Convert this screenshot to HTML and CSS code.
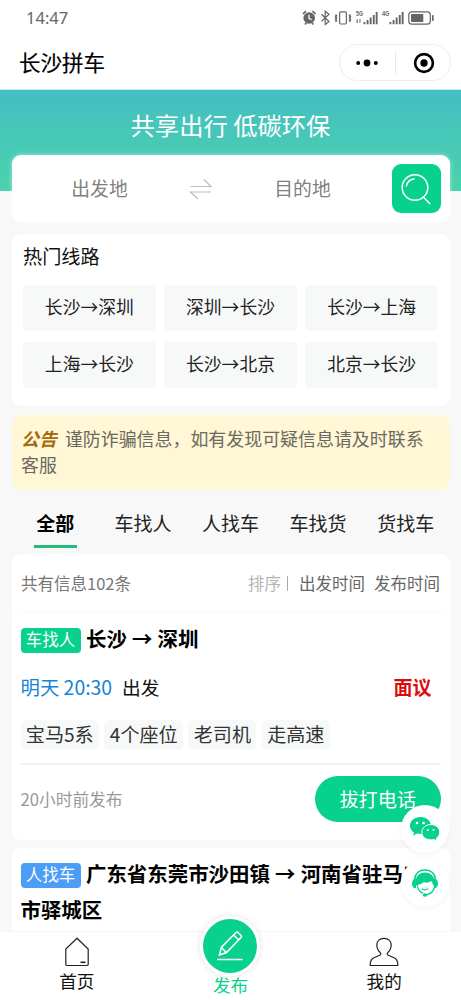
FILE: index.html
```html
<!DOCTYPE html>
<html lang="zh-CN">
<head>
<meta charset="utf-8">
<meta name="viewport" content="width=device-width, initial-scale=1">
<title>长沙拼车</title>
<link rel="stylesheet" href="styles.css">
</head>
<body>
<div class="app">
  <header class="status">
    <span class="clock">14:47</span>
    <svg class="status-icons" width="134" height="18" viewBox="0 0 134 18" fill="none" stroke="#666" stroke-width="1.2">
      <circle cx="7.2" cy="9" r="5.8" fill="#666" stroke="none"/>
      <path d="M1 5.2A8 8 0 0 1 4 2.2M10.400 2.200a8 8 0 0 1 3 3M3 15.500l1.400-1.700M11.400 15.500l-1.400-1.700" stroke-width="1.600"/>
      <path d="M7 5.800V9.300l2.600 1.500" stroke="#fff" stroke-width="1.300"/>
      <path d="M19.500 5.300l7.500 7.200-3.800 3V2.200l3.800 3-7.500 7.200"/>
      <rect x="37.600" y="2.800" width="6.800" height="12.200" rx="1.200"/>
      <path d="M33.500 5.500l1 1.200-1 1.200 1 1.200-1 1.200 1 1.200-1 1.200M48.500 5.500l-1 1.200 1 1.200-1 1.200 1 1.200-1 1.200 1 1.200" stroke-width="1.500"/>
      <g fill="#666" stroke="none">
        <text x="54" y="7.300" class="net" textLength="7" lengthAdjust="spacingAndGlyphs">5G</text>
        <path d="M54.500 13v-2l1.200-1v4h-1zM57.500 10h1v3l-.5 1h-.5zM61.500 13h1.800v2.200h-1.800zM64.600 11h1.900v4.200h-1.900zM67.700 8.500h1.900v6.700h-1.900zM70.800 6h1.900v9.200h-1.900zM73.700 3h1.900v12.200h-1.900z"/>
        <text x="80" y="7.300" class="net" textLength="7.500" lengthAdjust="spacingAndGlyphs">4G</text>
        <path d="M87.500 13h1.800v2.200h-1.800zM90.600 11h1.900v4.200h-1.900zM93.700 8.500h1.900v6.700h-1.900zM96.800 6h1.900v9.200h-1.900zM99.700 3h1.900v12.200h-1.900z"/>
        <rect x="109" y="5" width="12.300" height="8" rx=".8"/>
        <rect x="130" y="6" width="1.700" height="6" rx=".8"/>
      </g>
      <rect x="106.800" y="2.800" width="21.500" height="12.400" rx="3"/>
    </svg>
  </header>
  <div class="titlebar">
    <h1>长沙拼车</h1>
    <div class="capsule">
      <svg width="28" height="12" viewBox="0 0 28 12"><circle cx="5.200" cy="6" r="2"/><circle cx="14" cy="6" r="3.400"/><circle cx="22.800" cy="6" r="2"/></svg>
      <i class="capsule-line"></i>
      <svg width="22" height="22" viewBox="0 0 22 22"><circle cx="11" cy="11" r="8.900" fill="none" stroke="#000" stroke-width="2.600"/><circle cx="11" cy="11" r="3.700"/></svg>
    </div>
  </div>

  <div class="hero">共享出行 低碳环保</div>

  <main class="page">
    <section class="search">
      <span class="place">出发地</span>
      <svg class="swap" width="24" height="24" viewBox="0 0 24 24" fill="none" stroke="#bdbdbd" stroke-width="1.200"><path d="M1.500 9.500H22L15 2.500M22 15H1.500l7.500 7"/></svg>
      <span class="place">目的地</span>
      <button class="search-btn" aria-label="搜索">
        <svg width="32" height="34" viewBox="0 0 32 34" fill="none" stroke="#fff" stroke-width="1.500"><circle cx="15" cy="15.500" r="12.800"/><path d="M6.300 14.500a8.800 8.800 0 0 1 8.200-7.800M23.200 25l7 7"/></svg>
      </button>
    </section>

    <section class="hot">
      <h2>热门线路</h2>
      <div class="routes">
        <span>长沙→深圳</span><span>深圳→长沙</span><span>长沙→上海</span>
        <span>上海→长沙</span><span>长沙→北京</span><span>北京→长沙</span>
      </div>
    </section>

    <p class="notice"><em>公告</em>谨防诈骗信息，如有发现可疑信息请及时联系客服</p>

    <nav class="tabs">
      <span class="tab active">全部</span><span class="tab">车找人</span><span class="tab">人找车</span><span class="tab">车找货</span><span class="tab">货找车</span>
    </nav>

    <section class="list">
      <div class="list-head">
        <span>共有信息102条</span>
        <span class="sort"><span class="sort-label">排序</span><i></i><span>出发时间</span><span>发布时间</span></span>
      </div>
      <article class="trip">
        <h3><b class="kind">车找人</b>长沙 → 深圳</h3>
        <div class="when"><span><span class="time">明天 20:30</span>出发</span><strong>面议</strong></div>
        <div class="tags"><span>宝马5系</span><span>4个座位</span><span>老司机</span><span>走高速</span></div>
        <div class="foot"><span>20小时前发布</span><button class="call">拔打电话</button></div>
      </article>
    </section>
    <article class="trip next">
      <h3><b class="kind blue">人找车</b>广东省东莞市沙田镇 → 河南省驻马店市驿城区</h3>
    </article>
  </main>

  <aside class="floats">
    <div class="float">
      <svg width="32" height="28" viewBox="0 0 32 28" fill="#07d18c">
        <path d="M11.500 2C5.600 2 1 5.900 1 10.700c0 2.800 1.500 5.200 4 6.800L4 20.700l4-2.100c1.100.3 2.300.5 3.500.5 5.800 0 10.500-3.700 10.500-8.400S17.300 2 11.500 2z"/>
        <path d="M21.800 9.500c-5 0-9 3.400-9 7.700s4 7.700 9 7.700c1.100 0 2.100-.2 3.100-.5l3.200 1.900-.8-3c2.200-1.400 3.500-3.500 3.500-6.100 0-4.300-4-7.700-9-7.700z" stroke="#fff"/>
        <g fill="#fff"><circle cx="8" cy="8" r="1.300"/><circle cx="14.500" cy="8" r="1.300"/><circle cx="18.700" cy="15" r="1"/><circle cx="24.500" cy="15" r="1"/></g>
      </svg>
    </div>
    <div class="float">
      <svg width="30" height="30" viewBox="0 0 30 30" fill="none" stroke="#07d18c">
        <path d="M4.500 11C5.500 5.500 9.500 2 15 2s9.500 3.500 10.500 9" stroke-width="1.500"/>
        <path d="M5.500 16C5 8.500 9 4.500 15 4.500S25 8.500 24.500 16l-1.500 2c0-2.200-.6-3.700-2-5-2.600 2.200-5.400 1.900-7.300 1-1.200 1.600-3 2.300-5.200 2.400L7.500 19z" fill="#07d18c" stroke="none"/>
        <path d="M6 10.500v9.700C3.300 20.200 2 18.300 2 15.400s1.300-4.700 4-4.900zM24 10.500v9.700c2.700 0 4-1.900 4-4.800s-1.300-4.700-4-4.900z" fill="#07d18c" stroke="none"/>
        <path d="M7.500 19c1 3 3 5.300 5.500 6.300M11.800 20.800c2 1.300 4.400 1.300 6.400 0M24.500 19c-1 4.300-3.800 7.200-8.500 7.900" stroke-width="1.300"/>
        <ellipse cx="15" cy="27" rx="2.300" ry="1.700" fill="#07d18c" stroke="none"/>
      </svg>
    </div>
  </aside>

  <nav class="bottom">
    <div class="item">
      <svg width="26" height="30" viewBox="0 0 26 30" fill="none" stroke="#222" stroke-width="1.200"><path d="M13 1.200L1.800 12v15.200c0 .8.500 1.300 1.300 1.300h19.800c.8 0 1.300-.5 1.300-1.300V12z"/><path d="M16.500 25.300h5" stroke-width="1.600"/></svg>
      <span>首页</span>
    </div>
    <div class="item publish">
      <div class="disc">
        <svg width="30" height="32" viewBox="0 0 30 32" fill="none" stroke="#fff" stroke-width="1.600"><path d="M4.500 25l1.800-7.500L21 2.500c.6-.6 1.400-.6 2 0l3 3c.6.600.6 1.400 0 2L11.500 22.500zM18.500 5l5.200 5M6.300 17.500l5.200 5M2 29.500h25.500"/></svg>
      </div>
      <span>发布</span>
    </div>
    <div class="item">
      <svg width="30" height="30" viewBox="0 0 30 30" fill="none" stroke="#222" stroke-width="1.200"><path d="M15 1.300c-4.300 0-7.200 2.700-7.200 6.500 0 3.300 1.500 6.200 3.600 8 .7.700.4 2-.7 2.500L4.500 21c-2.300 1-3.300 3.700-3.300 7.500h27.600c0-3.800-1-6.500-3.300-7.500l-6.200-2.700c-1.100-.5-1.400-1.800-.7-2.500 2.100-1.800 3.600-4.700 3.600-8 0-3.800-2.900-6.500-7.200-6.500z"/></svg>
      <span>我的</span>
    </div>
  </nav>
</div>
</body>
</html>
```
FILE: styles.css
```css
* { box-sizing: border-box; margin: 0; padding: 0; }
body { background: #f8f8f8; font-family: "Noto Sans CJK SC", sans-serif; color: #222; }
button { border: 0; font: inherit; color: inherit; }
svg { display: block; flex: none; }
.app { position: relative; width: 461px; height: 1000px; overflow: hidden; background: #f8f8f8; }

.status { height: 36px; background: #fff; display: flex; justify-content: space-between; align-items: center; padding: 0 25px 0 26px; }
.clock { font: 16.500px/20px "Noto Sans", sans-serif; color: #666; }
.net { font: bold 7px "Liberation Sans", sans-serif; }
.titlebar { height: 54px; background: #fff; border-bottom: 1px solid #c9f0ea; display: flex; align-items: center; justify-content: space-between; padding: 0 10px 0 19px; }
.titlebar h1 { font-size: 21.500px; font-weight: 400; line-height: 30px; padding-bottom: 2px; color: #000; -webkit-text-stroke: .2px #000; }
.capsule { width: 112px; height: 37px; border: 1px solid #eee; border-radius: 19px; display: flex; align-items: center; justify-content: space-between; padding: 0 15px 0 13px; }
.capsule-line { width: 1px; height: 22px; background: #e8e8e8; margin-right: 3px; }

.hero { height: 101px; background: linear-gradient(#44bec3, #4bd2ab); color: #fff; font-size: 24.300px; line-height: 36px; text-align: center; padding-top: 17px; }

.page { margin-top: -36px; padding: 0 11.500px; }
.search { height: 67px; background: #fff; border-radius: 9px; box-shadow: 0 0 5px rgba(255,255,255,.5); display: flex; align-items: center; padding-right: 9px; }
.place { flex: 1; text-align: center; font-size: 18.800px; line-height: 28px; padding-bottom: 2px; color: #808080; }
.swap { margin: 0 2px 0 1px; }
.swap + .place { padding-right: 1px; }
.search-btn { width: 49px; height: 49px; border-radius: 9px; background: #07d18c; display: flex; align-items: center; justify-content: center; }

.hot { margin-top: 12px; height: 172px; background: #fff; border-radius: 9px; padding: 8px 11.500px; }
.hot h2 { font-size: 19.200px; font-weight: 400; line-height: 28px; color: #111; }
.routes { margin-top: 15px; display: grid; grid-template-columns: repeat(3, 1fr); grid-auto-rows: 46px; gap: 10.500px 8.500px; }
.routes span { background: #f7f9f9; border-radius: 4px; text-align: center; font-size: 17.800px; line-height: 43px; }

.notice { margin-top: 8.500px; height: 75.500px; background: #fff7d6; border-radius: 9px; padding: 10px 9.500px; font-size: 17.950px; line-height: 26px; color: #6b6960; }
.notice em { font-weight: 700; color: #a36b0c; margin-right: 8px; }

.tabs { height: 63.500px; padding: 16px 0 4px 0; display: flex; }
.tab { flex: 1; height: 43px; display: flex; flex-direction: column; align-items: center; font-size: 19px; line-height: 34px; white-space: nowrap; }
.tab.active { font-weight: 700; color: #000; }
.tab.active::after { content: ""; width: 43px; height: 3px; margin-top: 5px; background: #26b97e; flex: none; }

.list { background: #fff; border-radius: 9px; height: 286px; }
.list-head { height: 58.500px; padding: 1px 9.500px 0; display: flex; align-items: center; justify-content: space-between; font-size: 16.500px; line-height: 24px; color: #777; }
.sort { display: flex; align-items: center; color: #666; }
.sort-label { color: #b5b5b5; }
.sort i { width: 1px; height: 15px; background: #aaa; margin: 0 11px 0 6px; }
.sort span + span { margin-left: 9px; }
.trip { background: #fff; border-radius: 9px; padding: 9px 9px 0; }
.list .trip { height: 227px; box-shadow: 0 -1px 1px #fafafa; }
.trip h3 { font-size: 20.450px; line-height: 36px; color: #000; font-weight: 700; word-spacing: .500px; }
.list .trip h3 { margin-top: -1px; }
.kind { display: inline-block; vertical-align: 1px; width: 60px; height: 25px; margin-right: 5.500px; background: #07d18c; border-radius: 4px; color: #fff; text-align: center; font-size: 16.500px; font-weight: 400; line-height: 23px; }
.kind.blue { background: #4b9df5; }
.when { margin-top: 15.500px; height: 30px; display: flex; justify-content: space-between; align-items: center; padding-right: 9px; font-size: 18.700px; color: #111; }
.time { color: #1683d4; margin-right: 10px; font-size: 19.400px; }
.when strong { font-size: 19px; color: #dc0a0a; }
.tags { margin-top: 18.500px; display: flex; gap: 5.500px; }
.tags span { height: 30px; padding: 0 5.300px; background: #f7f9f9; border-radius: 5px; font-size: 19.100px; line-height: 29px; white-space: nowrap; color: #333; }
.foot { margin-top: 13px; padding-top: 11px; border-top: 2px solid #f2f2f2; display: flex; align-items: center; justify-content: space-between; font-size: 16.700px; color: #999; }
.foot > span { padding-bottom: 1px; }
.call { width: 125.500px; height: 46px; border-radius: 23px; background: #07d18c; color: #fff; font-size: 19.200px; line-height: 43px; }
.next { margin-top: 8.500px; height: 160px; padding-top: 7px; }

.floats { position: absolute; left: 401px; top: 805px; display: flex; flex-direction: column; gap: 6px; }
.float { width: 48px; height: 48px; border-radius: 50%; background: #fff; box-shadow: 0 1px 5px rgba(0,0,0,.06); display: flex; align-items: center; justify-content: center; }

.bottom { position: absolute; left: 0; right: 0; bottom: 0; height: 68px; background: #fff; box-shadow: 0 -1px 1px #f6f6f6; display: grid; grid-template-columns: repeat(3, 1fr); }
.item { display: flex; flex-direction: column; align-items: center; padding-top: 5px; font-size: 17.600px; line-height: 24px; color: #111; }
.item > span { margin-top: 2px; }
.publish { color: #07d18c; padding-top: 0; margin-top: -16px; }
.disc { width: 60px; height: 60px; border: 3px solid #fff; border-radius: 50%; background: #07d18c; box-shadow: 0 0 6px rgba(0,0,0,.12); flex: none; display: flex; align-items: center; justify-content: center; }
.publish > span { margin-top: -3px; }
```
